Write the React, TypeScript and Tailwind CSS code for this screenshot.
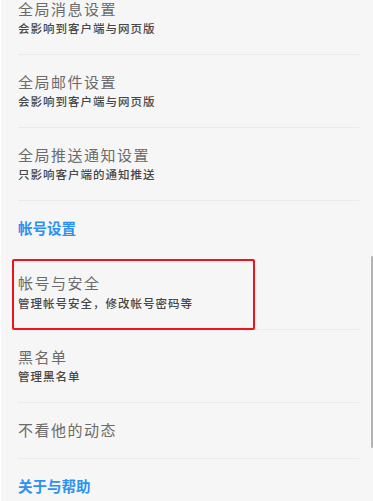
const FONT = "font-['Noto_Sans_CJK_SC','Noto_Sans',sans-serif]";

type Item = { title: string; desc?: string; marked?: boolean };

const GENERAL: Item[] = [
  { title: "全局消息设置", desc: "会影响到客户端与网页版" },
  { title: "全局邮件设置", desc: "会影响到客户端与网页版" },
  { title: "全局推送通知设置", desc: "只影响客户端的通知推送" },
];

const ACCOUNT: Item[] = [
  { title: "帐号与安全", desc: "管理帐号安全，修改帐号密码等", marked: true },
  { title: "黑名单", desc: "管理黑名单" },
  { title: "不看他的动态" },
];

function Row({ item }: { item: Item }) {
  return (
    <div
      className={`relative ml-[18px] mr-[14px] border-b border-[#ebebeb] pt-[17px] ${
        item.desc ? "pb-[18px]" : "pb-[18px]"
      }`}
    >
      <div className="text-[15px] leading-[20px] tracking-[1.5px] text-[#6b6b6b]">{item.title}</div>
      {item.desc && (
        <div className="mt-[1.3px] text-[11.5px] font-medium leading-[16px] tracking-[1px] text-[#474747]">
          {item.desc}
        </div>
      )}
      {/* red highlight frame drawn over the row */}
      {item.marked && (
        <div className="absolute left-[-6px] top-[3px] h-[71px] w-[243px] rounded-[2px] border-2 border-[#f2121b]" />
      )}
    </div>
  );
}

function Header({ label }: { label: string }) {
  return (
    <div className="flex h-[55px] items-center px-[18px] pb-[2px] text-[14.5px] font-bold text-[#2b91f2]">
      {label}
    </div>
  );
}

export default function App() {
  return (
    <div className={`relative h-[501px] w-[373px] overflow-hidden border-l border-white bg-[#f6f6f6] ${FONT}`}>
      <div className="-mt-[18.5px] -ml-px">
        {GENERAL.map((it) => (
          <Row key={it.title} item={it} />
        ))}
        <Header label="帐号设置" />
        {ACCOUNT.map((it) => (
          <Row key={it.title} item={it} />
        ))}
        <Header label="关于与帮助" />
      </div>
      <div className="absolute right-0 top-[256px] h-[192px] w-[2px] rounded-full bg-[#b3b3b3]" />
    </div>
  );
}
